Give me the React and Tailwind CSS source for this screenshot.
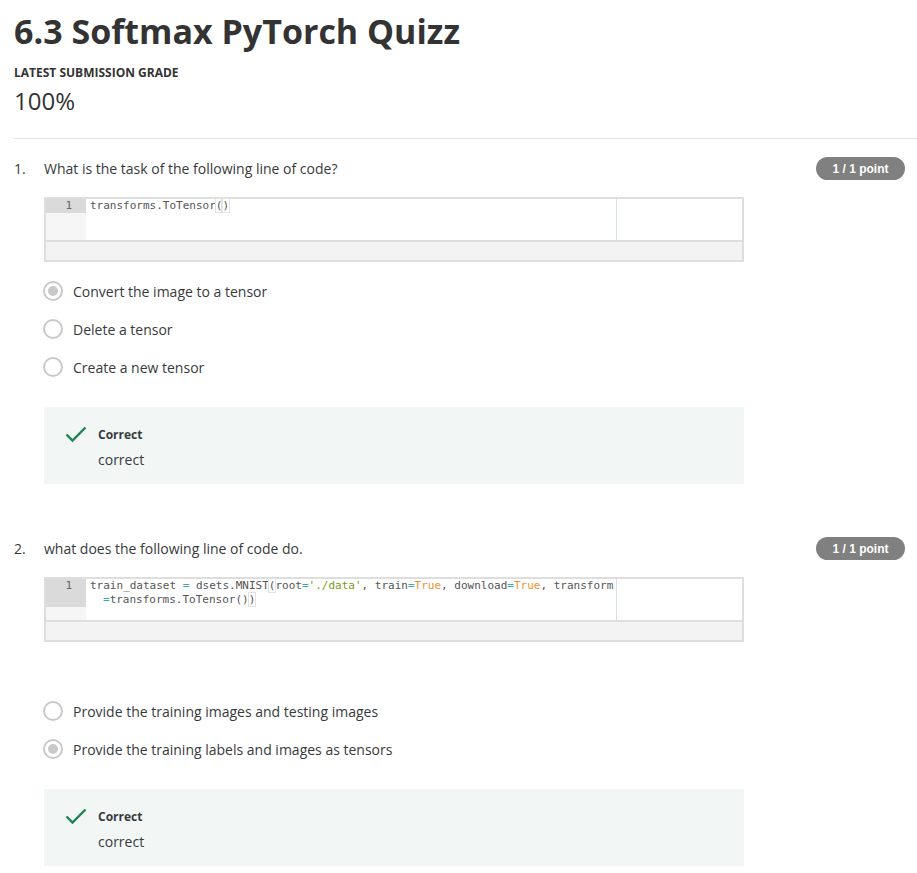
import React from "react";

const sans = { fontFamily: '"Open Sans", "Liberation Sans", sans-serif' };
const mono = { fontFamily: '"DejaVu Sans Mono", monospace' };

function Radio({ checked }) {
  return (
    <span className="w-5 h-5 rounded-full border-2 border-[#c9c9c9] flex items-center justify-center shrink-0">
      {checked && <span className="w-[10px] h-[10px] rounded-full bg-[#c9c9c9]" />}
    </span>
  );
}

function Option({ label, checked }) {
  return (
    <div className="h-[38px] flex items-center gap-[10px] pl-[29px]">
      <Radio checked={checked} />
      <span className="text-[14px] text-[#373a3c]">{label}</span>
    </div>
  );
}

function Badge() {
  return (
    <span
      className="h-[23px] w-[89px] rounded-full bg-[#808080] text-white text-[12px] font-bold flex items-center justify-center"
      style={{ fontFamily: '"Liberation Sans", Arial, sans-serif' }}
    >
      1 / 1 point
    </span>
  );
}

function Question({ num, text }) {
  return (
    <div className="flex items-center justify-between pr-3 h-[23px]">
      <div className="flex items-center text-[14px] text-[#373a3c]">
        <span className="w-[30px]">{num}.</span>
        <span>{text}</span>
      </div>
      <Badge />
    </div>
  );
}

function CodeBox({ lines = 1, children }) {
  return (
    <div className="ml-[30px] w-[700px] border-2 border-[#dedede] bg-white">
      <div className="flex min-h-[41px]">
        <div className="w-[40px] bg-[#f6f6f6] flex flex-col">
          <div
            className="bg-[#dadada] text-right pr-[14px] text-[11px] leading-[14px] text-[#666]"
            style={{ ...mono, height: lines * 14 }}
          >
            1
          </div>
        </div>
        <div className="w-[531px] pl-1 text-[11px] leading-[14px] text-[#555] border-r border-[#d5dde6]" style={mono}>
          {children}
        </div>
        <div className="flex-1" />
      </div>
      <div className="h-[20px] bg-[#f3f3f3] border-t-2 border-[#dedede]" />
    </div>
  );
}

function Bracket({ children }) {
  return <span className="outline outline-1 outline-[#e2e2e2]">{children}</span>;
}

function Feedback() {
  return (
    <div className="ml-[30px] w-[700px] h-[77px] bg-[#f2f7f5] flex pl-[21px] pt-[18px]">
      <svg width="22" height="17" viewBox="0 0 22 17" className="mt-[1px] shrink-0">
        <path d="M1.5 8.5 L7.5 14.5 L20.5 1.5" fill="none" stroke="#1f8354" strokeWidth="2.4" />
      </svg>
      <div className="ml-[11px]">
        <div className="text-[12px] font-bold text-[#373a3c] leading-[20px]">Correct</div>
        <div className="text-[14px] text-[#373a3c] leading-[20px] mt-[5px]">correct</div>
      </div>
    </div>
  );
}

export default function App() {
  return (
    <div className="bg-white min-h-screen pl-[14px] pb-4" style={sans}>
      <h1 className="pt-[10px] text-[34px] leading-[42px] font-bold text-[#333]">6.3 Softmax PyTorch Quizz</h1>
      <div className="mt-[13px] text-[12px] leading-[16px] font-bold text-[#333] uppercase">Latest Submission Grade</div>
      <div className="mt-[5px] text-[24px] leading-[30px] text-[#333]">100%</div>
      <div className="mt-[22px] h-px bg-[#e1e1e1]" />

      <div className="mt-[18px]">
        <Question num={1} text="What is the task of the following line of code?" />
      </div>
      <div className="mt-[17px]">
        <CodeBox>
          <div>
            transforms.ToTensor<Bracket>(</Bracket>
            <Bracket>)</Bracket>
          </div>
        </CodeBox>
      </div>
      <div className="mt-[10px]">
        <Option label="Convert the image to a tensor" checked />
        <Option label="Delete a tensor" />
        <Option label="Create a new tensor" />
      </div>
      <div className="mt-[21px]">
        <Feedback />
      </div>

      <div className="mt-[53px]">
        <Question num={2} text="what does the following line of code do." />
      </div>
      <div className="mt-[17px]">
        <CodeBox lines={2}>
          <div>
            train_dataset <span className="text-[#3aa9a9]">=</span> dsets.MNIST<Bracket>(</Bracket>root
            <span className="text-[#3aa9a9]">=</span>
            <span className="text-[#7a9a10]">'./data'</span>, train<span className="text-[#3aa9a9]">=</span>
            <span className="text-[#f0912f]">True</span>, download<span className="text-[#3aa9a9]">=</span>
            <span className="text-[#f0912f]">True</span>, transform
          </div>
          <div className="pl-[13px]">
            <span className="text-[#3aa9a9]">=</span>transforms.ToTensor()<Bracket>)</Bracket>
          </div>
        </CodeBox>
      </div>
      <div className="mt-[50px]">
        <Option label="Provide the training images and testing images" />
        <Option label="Provide the training labels and images as tensors" checked />
      </div>
      <div className="mt-[21px]">
        <Feedback />
      </div>
    </div>
  );
}
